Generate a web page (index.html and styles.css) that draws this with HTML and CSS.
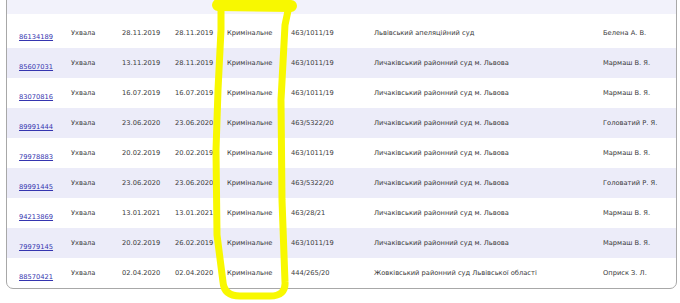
FILE: index.html
```html
<!DOCTYPE html>
<html lang="uk">
<head>
<meta charset="utf-8">
<title>Рішення</title>
<link rel="stylesheet" href="styles.css">
</head>
<body>
<div class="page">
  <div class="table-wrap">
    <div class="head-band"></div>
    <div class="row first">
      <a class="c link" href="#">86134189</a><span class="c">Ухвала</span><span class="c">28.11.2019</span><span class="c">28.11.2019</span><span class="c">Кримінальне</span><span class="c">463/1011/19</span><span class="c">Львівський апеляційний суд</span><span class="c">Белена А. В.</span>
    </div>
    <div class="row alt">
      <a class="c link" href="#">85607031</a><span class="c">Ухвала</span><span class="c">13.11.2019</span><span class="c">28.11.2019</span><span class="c">Кримінальне</span><span class="c">463/1011/19</span><span class="c">Личаківський районний суд м. Львова</span><span class="c">Мармаш В. Я.</span>
    </div>
    <div class="row">
      <a class="c link" href="#">83070816</a><span class="c">Ухвала</span><span class="c">16.07.2019</span><span class="c">16.07.2019</span><span class="c">Кримінальне</span><span class="c">463/1011/19</span><span class="c">Личаківський районний суд м. Львова</span><span class="c">Мармаш В. Я.</span>
    </div>
    <div class="row alt">
      <a class="c link" href="#">89991444</a><span class="c">Ухвала</span><span class="c">23.06.2020</span><span class="c">23.06.2020</span><span class="c">Кримінальне</span><span class="c">463/5322/20</span><span class="c">Личаківський районний суд м. Львова</span><span class="c">Головатий Р. Я.</span>
    </div>
    <div class="row">
      <a class="c link" href="#">79978883</a><span class="c">Ухвала</span><span class="c">20.02.2019</span><span class="c">20.02.2019</span><span class="c">Кримінальне</span><span class="c">463/1011/19</span><span class="c">Личаківський районний суд м. Львова</span><span class="c">Мармаш В. Я.</span>
    </div>
    <div class="row alt">
      <a class="c link" href="#">89991445</a><span class="c">Ухвала</span><span class="c">23.06.2020</span><span class="c">23.06.2020</span><span class="c">Кримінальне</span><span class="c">463/5322/20</span><span class="c">Личаківський районний суд м. Львова</span><span class="c">Головатий Р. Я.</span>
    </div>
    <div class="row">
      <a class="c link" href="#">94213869</a><span class="c">Ухвала</span><span class="c">13.01.2021</span><span class="c">13.01.2021</span><span class="c">Кримінальне</span><span class="c">463/28/21</span><span class="c">Личаківський районний суд м. Львова</span><span class="c">Мармаш В. Я.</span>
    </div>
    <div class="row alt">
      <a class="c link" href="#">79979145</a><span class="c">Ухвала</span><span class="c">20.02.2019</span><span class="c">26.02.2019</span><span class="c">Кримінальне</span><span class="c">463/1011/19</span><span class="c">Личаківський районний суд м. Львова</span><span class="c">Мармаш В. Я.</span>
    </div>
    <div class="row">
      <a class="c link" href="#">88570421</a><span class="c">Ухвала</span><span class="c">02.04.2020</span><span class="c">02.04.2020</span><span class="c">Кримінальне</span><span class="c">444/265/20</span><span class="c">Жовківський районний суд Львівської області</span><span class="c">Оприск З. Л.</span>
    </div>
  </div>
  <svg class="marker" width="680" height="303" viewBox="0 0 680 303" aria-hidden="true">
    <path d="M218 5 L291 6" fill="none" stroke="#f8f800" stroke-width="12" stroke-linecap="round"/>
    <path d="M221 4 L289 6 L285 25 L281 100 L282 200 L285 282 Q286 296 270 296 L240 296 Q224 296 223 282 L217 235 L216 150 L218 90 L221 30 Z" fill="none" stroke="#f8f800" stroke-width="7" stroke-linejoin="round"/>
  </svg>
</div>
</body>
</html>
```

FILE: styles.css
```css
html, body {
  margin: 0;
  padding: 0;
  background: #ffffff;
}

.page {
  position: relative;
  width: 680px;
  height: 303px;
  overflow: hidden;
}

.table-wrap {
  margin: -20px 0 0 6px;
  width: 669px;
  border: 1px solid #a8a8a8;
  border-radius: 0 0 7px 7px;
  background: #ffffff;
  overflow: hidden;
  font-family: "DejaVu Sans", Verdana, sans-serif;
  font-size: 6.7px;
  color: #3a3a3a;
}

.head-band {
  height: 33px;
  background: #f2f2fb;
}

.row {
  display: grid;
  grid-template-columns: 52px 51px 53px 52px 64px 83px 229px 1fr;
  align-items: center;
  height: 30px;
  padding-left: 12px;
  white-space: nowrap;
}

.row.first {
  height: 34px;
  padding-top: 4px;
  box-sizing: border-box;
}

.row.alt {
  background: #ececf9;
}

.link {
  color: #3535b0;
  text-decoration: underline;
  margin-top: 7px;
}

.marker {
  position: absolute;
  left: 0;
  top: 0;
  pointer-events: none;
}
```
